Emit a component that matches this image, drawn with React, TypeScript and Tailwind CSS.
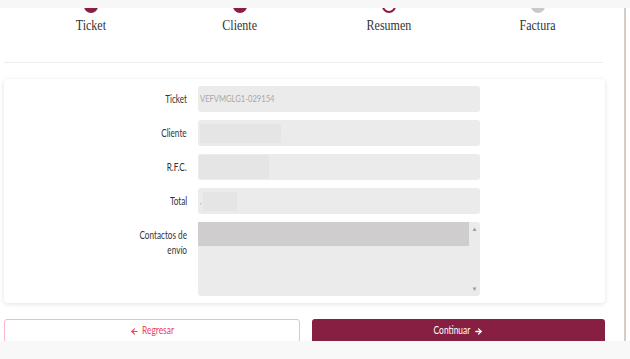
import React from "react";
import { ArrowLeft, ArrowRight } from "lucide-react";

const steps = [
  { label: "Ticket", state: "done" },
  { label: "Cliente", state: "done" },
  { label: "Resumen", state: "current" },
  { label: "Factura", state: "todo" },
];

const narrow = "[font-family:Lato,'Liberation_Sans',sans-serif]";

function StepDot({ state }: { state: string }) {
  if (state === "done") return <div className="h-[14px] w-[14px] rounded-full bg-[#8a1e42]" />;
  if (state === "current") return <div className="h-[14px] w-[14px] rounded-full border-2 border-[#8a1e42] bg-white" />;
  return <div className="h-[14px] w-[14px] rounded-full bg-[#c9c9c9]" />;
}

function Field({ label, children }: { label: React.ReactNode; children?: React.ReactNode }) {
  return (
    <div className="flex items-start">
      <div className={`w-[183px] pt-[6px] text-right text-[10.5px] leading-[15px] text-[#333] ${narrow}`}>
        <div className="inline-block origin-right scale-x-[0.78]">{label}</div>
      </div>
      <div className="ml-[11px] w-[282px]">{children}</div>
    </div>
  );
}

export default function App() {
  return (
    <div className="relative flex h-[359px] w-[630px] overflow-hidden bg-white">
      <div className="absolute left-0 top-0 z-10 h-[8px] w-full bg-[#f7f7f7]" />

      <div className="relative flex w-[624px] flex-col">
        {/* Stepper */}
        <div className="flex h-[62px] w-[612px] pl-[16px]">
          {steps.map((s) => (
            <div key={s.label} className="flex flex-1 flex-col items-center">
              <div className="-mt-[1px]">
                <StepDot state={s.state} />
              </div>
              <div className="mt-[3px] origin-center scale-x-[0.8] text-[15px] leading-[18px] text-[#333] [font-family:'Liberation_Serif',serif]">
                {s.label}
              </div>
            </div>
          ))}
        </div>
        <div className="mx-[4px] h-[1px] w-[599px] bg-[#eeeeee]" />

        {/* Card */}
        <div className="ml-[4px] mt-[16px] flex w-[601px] flex-col gap-[8px] rounded-[4px] bg-white pb-[7px] pt-[7px] shadow-[0_1px_5px_rgba(0,0,0,0.12)]">
          <Field label="Ticket">
            <div className={`flex h-[26px] items-center rounded-[3px] bg-[#ebebeb] pl-[2px] text-[9.5px] text-[#a8a8a8] ${narrow}`}>
              <span className="inline-block origin-left scale-x-[0.8]">VEFVMGLG1-029154</span>
            </div>
          </Field>
          <Field label="Cliente">
            <div className="flex h-[26px] items-center rounded-[3px] bg-[#ebebeb] pl-[2px]">
              <div className="h-[19px] w-[81px] bg-[#e5e5e5]" />
            </div>
          </Field>
          <Field label="R.F.C.">
            <div className="flex h-[26px] items-center rounded-[3px] bg-[#ebebeb] pl-[1px]">
              <div className="h-[24px] w-[70px] bg-[#e5e5e5]" />
            </div>
          </Field>
          <Field label="Total">
            <div className="flex h-[26px] items-center rounded-[3px] bg-[#ebebeb] pl-[2px]">
              <span className="text-[8px] text-[#aaa]">,</span>
              <div className="ml-[1px] h-[19px] w-[34px] bg-[#e5e5e5]" />
            </div>
          </Field>
          <Field label={<>Contactos de<br />envío</>}>
            <div className="flex h-[74px] rounded-[3px] bg-[#ebebeb]">
              <div className="flex-1">
                <div className="h-[24px] bg-[#cfcdcd]" />
              </div>
              <div className="flex w-[11px] flex-col items-center justify-between py-[4px] text-[6px] leading-none text-[#999]">
                <span>▲</span>
                <span>▼</span>
              </div>
            </div>
          </Field>
        </div>

        {/* Buttons */}
        <div className={`ml-[4px] mt-[16px] flex w-[601px] gap-[12px] text-[10.5px] ${narrow}`}>
          <button className="flex h-[24px] flex-1 items-center justify-center gap-[3px] rounded-[3px] border border-[#f7b9c5] bg-white text-[#e9445f]">
            <ArrowLeft size={9} strokeWidth={3} />
            <span className="-mx-[4px] inline-block scale-x-[0.8]">Regresar</span>
          </button>
          <button className="flex h-[24px] flex-1 items-center justify-center gap-[3px] rounded-[3px] bg-[#861f42] text-white">
            <span className="-mx-[4px] inline-block scale-x-[0.8]">Continuar</span>
            <ArrowRight size={9} strokeWidth={3.5} />
          </button>
        </div>
      </div>

      <div className="mt-[8px] h-[337px] w-[2px] bg-[#d4ccc5]" />

      <div className="absolute bottom-0 left-0 h-[18px] w-full bg-[#f8f8f8]" />
    </div>
  );
}
